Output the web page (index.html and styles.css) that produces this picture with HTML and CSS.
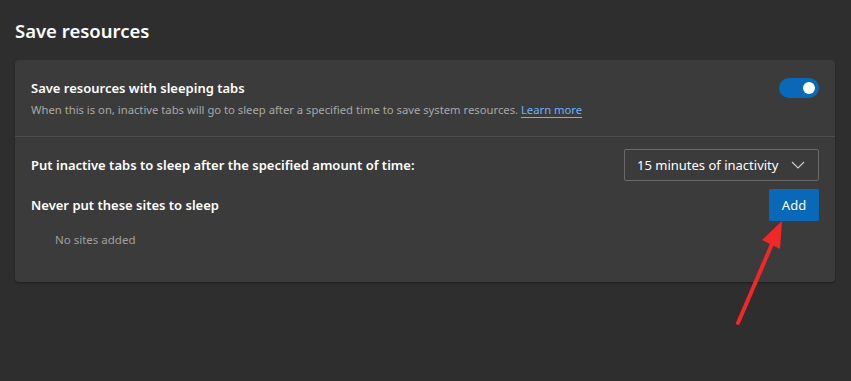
FILE: index.html
```html
<!DOCTYPE html>
<html>
<head>
    <title>Save resources</title>
    <link rel="stylesheet" href="styles.css">
</head>
<body>
    <div class="page">
        <h1>Save resources</h1>
        <div class="card">
            <div class="row row-top">
                <div class="row-text">
                    <div class="label">Save resources with sleeping tabs</div>
                    <div class="desc">When this is on, inactive tabs will go to sleep after a specified time to save system resources. <a href="#">Learn more</a></div>
                </div>
                <div class="toggle"><span class="knob"></span></div>
            </div>
            <div class="row row-select">
                <div class="label">Put inactive tabs to sleep after the specified amount of time:</div>
                <div class="dropdown">
                    <span>15 minutes of inactivity</span>
                    <svg width="14" height="8" viewBox="0 0 14 8"><path d="M1 1 L7 7 L13 1" fill="none" stroke="#cfcfcf" stroke-width="1.1"/></svg>
                </div>
            </div>
            <div class="row row-sites">
                <div class="label">Never put these sites to sleep</div>
                <button class="add-btn">Add</button>
            </div>
            <div class="empty">No sites added</div>
        </div>
    </div>
    <svg class="arrow" width="851" height="381" viewBox="0 0 851 381">
        <line x1="738" y1="323" x2="772" y2="244" stroke="#f02828" stroke-width="4" stroke-linecap="round"/>
        <polygon points="782,221 762,240 780,249" fill="#f02828"/>
    </svg>
</body>
</html>
```

FILE: styles.css
```css
body {
    margin: 0;
    background-color: #2e2e2e;
    font-family: "Noto Sans", "Open Sans", sans-serif;
    color: #fff;
    height: 381px;
    overflow: hidden;
}
.page {
    padding: 17px 16px 0 15px;
}
h1 {
    margin: 0 0 15px 0;
    font-size: 18.5px;
    font-weight: 600;
    line-height: 28px;
}
.card {
    background-color: #3b3b3b;
    border-radius: 4px;
    box-shadow: 0 1px 2px rgba(0,0,0,0.35);
    padding-bottom: 32px;
}
.row {
    display: flex;
    justify-content: space-between;
    align-items: center;
    padding: 0 16px;
}
.row-top {
    padding-top: 18px;
    padding-bottom: 18px;
    border-bottom: 1px solid #4e4e4e;
}
.label {
    font-size: 13px;
    font-weight: 600;
    line-height: 20px;
}
.desc {
    font-size: 11.25px;
    color: #a8a8a8;
    line-height: 16px;
    margin-top: 4px;
}
.desc a {
    color: #6cb3f5;
    text-decoration: underline;
    text-underline-offset: 3px;
}
.toggle {
    width: 40px;
    height: 20px;
    border-radius: 10px;
    background-color: #0a68b8;
    position: relative;
    margin-top: -20px;
}
.knob {
    position: absolute;
    width: 12px;
    height: 12px;
    border-radius: 50%;
    background: #fff;
    right: 4px;
    top: 4px;
}
.row-select {
    padding-top: 12px;
}
.dropdown {
    border: 1px solid #6a6a6a;
    border-radius: 2px;
    display: flex;
    align-items: center;
    justify-content: space-between;
    padding: 0 13px 0 12px;
    box-sizing: border-box;
    width: 195px;
    height: 32px;
    font-size: 13px;
    color: #fff;
}
.row-sites {
    padding-top: 8px;
}
.add-btn {
    width: 50px;
    height: 32px;
    border: none;
    border-radius: 2px;
    background-color: #0a68b8;
    color: #fff;
    font-family: inherit;
    font-size: 13px;
}
.empty {
    padding: 9px 0 0 40px;
    font-size: 11.5px;
    color: #a0a0a0;
    line-height: 20px;
}
.arrow {
    position: absolute;
    top: 0;
    left: 0;
    pointer-events: none;
}
```
